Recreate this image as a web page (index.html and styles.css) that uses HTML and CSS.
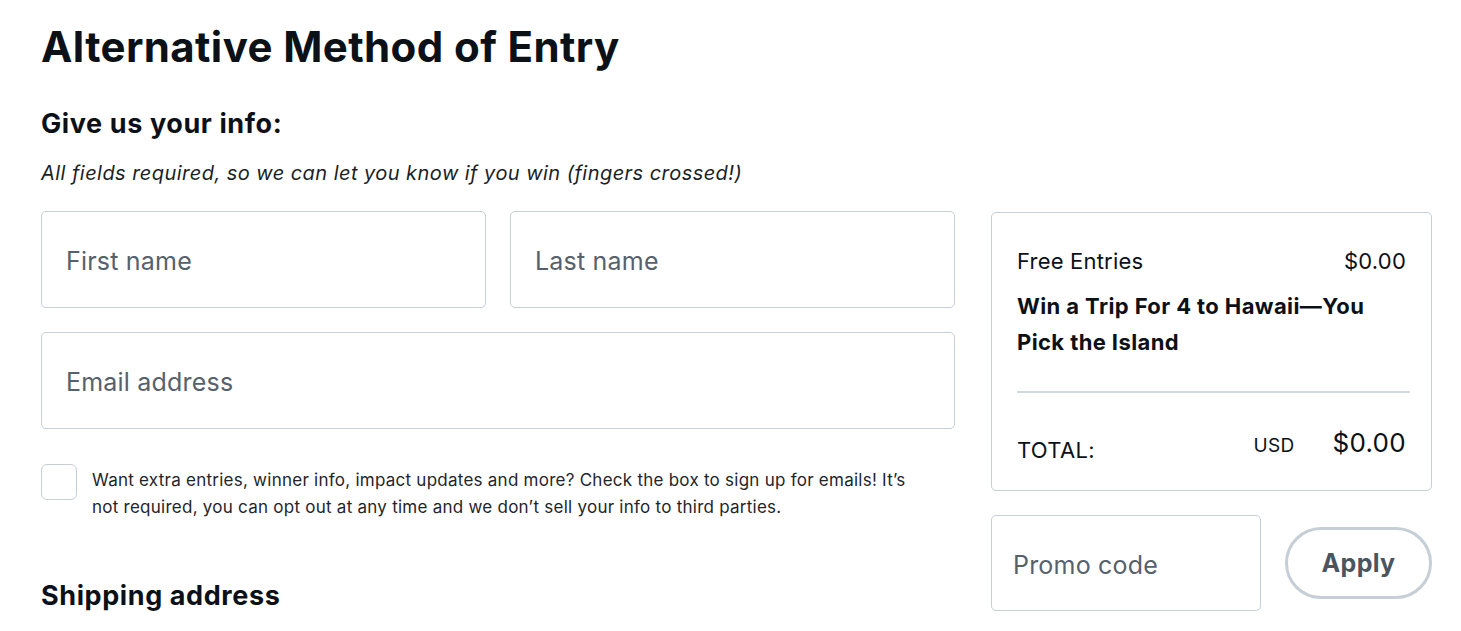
FILE: index.html
```html
<!DOCTYPE html>
<html>
<head>
<meta charset="utf-8">
<link rel="stylesheet" href="styles.css">
</head>
<body>
<div class="page">
  <h1 class="title">Alternative Method of Entry</h1>
  <div class="layout">
    <div class="left">
      <h2 class="section">Give us your info:</h2>
      <p class="note">All fields required, so we can let you know if you win (fingers crossed!)</p>
      <div class="row">
        <div class="field">First name</div>
        <div class="field">Last name</div>
      </div>
      <div class="field wide">Email address</div>
      <div class="optin">
        <span class="check"></span>
        <p class="optin-text">Want extra entries, winner info, impact updates and more? Check the box to sign up for emails! It’s not required, you can opt out at any time and we don’t sell your info to third parties.</p>
      </div>
      <h2 class="section ship">Shipping address</h2>
    </div>
    <div class="right">
      <div class="card">
        <div class="line">
          <span>Free Entries</span>
          <span>$0.00</span>
        </div>
        <div class="prize">Win a Trip For 4 to Hawaii—You Pick the Island</div>
        <div class="divider"></div>
        <div class="total">
          <span class="total-label">TOTAL:</span>
          <span class="currency">USD</span>
          <span class="amount">$0.00</span>
        </div>
      </div>
      <div class="promo">
        <div class="field promo-field">Promo code</div>
        <button class="apply">Apply</button>
      </div>
    </div>
  </div>
</div>
</body>
</html>
```

FILE: styles.css
```css
* { box-sizing: border-box; }
html, body { margin: 0; padding: 0; background: #fff; }
body {
  font-family: "Inter", "Liberation Sans", sans-serif;
  color: #0c1117;
  overflow: hidden;
}
.page { padding: 22px 29px 0 41px; }
.title {
  margin: 0;
  font-size: 42px;
  font-weight: 700;
  line-height: 50px;
  letter-spacing: 0.4px;
}
.layout {
  display: flex;
  gap: 36px;
  margin-top: 35px;
}
.left { width: 914px; }
.right { width: 441px; padding-top: 105px; }
.section {
  margin: 0;
  font-size: 27px;
  font-weight: 700;
  line-height: 34px;
  letter-spacing: 0.6px;
}
.note {
  margin: 19px 0 0;
  font-style: italic;
  font-size: 20px;
  line-height: 26px;
  letter-spacing: 0.45px;
  color: #1a1f26;
}
.row {
  display: flex;
  gap: 24px;
  margin-top: 25px;
}
.field {
  flex: 1;
  height: 97px;
  border: 1px solid #c6ced6;
  border-radius: 5px;
  display: flex;
  align-items: center;
  padding: 3px 24px 0;
  font-size: 25px;
  letter-spacing: 0.2px;
  color: #56616c;
}
.wide { margin-top: 24px; height: 97px; }
.optin {
  display: flex;
  gap: 15px;
  margin-top: 35px;
}
.check {
  flex: none;
  width: 36px;
  height: 36px;
  border: 1px solid #c6ced6;
  border-radius: 6px;
}
.optin-text {
  margin: 3px 0 0;
  padding-right: 25px;
  font-size: 17px;
  line-height: 27px;
  color: #1f252c;
  letter-spacing: 0.25px;
}
.ship { margin-top: 58px; }
.card {
  border: 1px solid #c6ced6;
  border-radius: 5px;
  padding: 33px 25px 32px 25px;
}
.line {
  display: flex;
  justify-content: space-between;
  font-size: 22px;
  line-height: 30px;
  letter-spacing: 0.2px;
}
.prize {
  margin-top: 12px;
  font-size: 22px;
  font-weight: 700;
  line-height: 36px;
  letter-spacing: 0.4px;
  padding-right: 30px;
}
.divider {
  margin-top: 31px;
  margin-right: -4px;
  height: 2px;
  background: #d3d8dd;
}
.total {
  display: flex;
  align-items: baseline;
  margin-top: 34px;
}
.total-label { font-size: 22px; flex: 1; position: relative; top: 6px; letter-spacing: 0.3px; }
.currency { font-size: 19px; margin-right: 38px; letter-spacing: 0.3px; }
.amount { font-size: 26px; letter-spacing: 0.3px; }
.promo {
  display: flex;
  align-items: center;
  gap: 24px;
  margin-top: 24px;
}
.promo-field {
  flex: none;
  width: 270px;
  height: 96px;
  padding: 3px 21px 0;
}
.apply {
  flex: 1;
  height: 72px;
  border: 3px solid #c6ced6;
  border-radius: 36px;
  background: #fff;
  font-family: inherit;
  font-size: 25px;
  font-weight: 700;
  letter-spacing: 0.3px;
  color: #4a5560;
}
```
